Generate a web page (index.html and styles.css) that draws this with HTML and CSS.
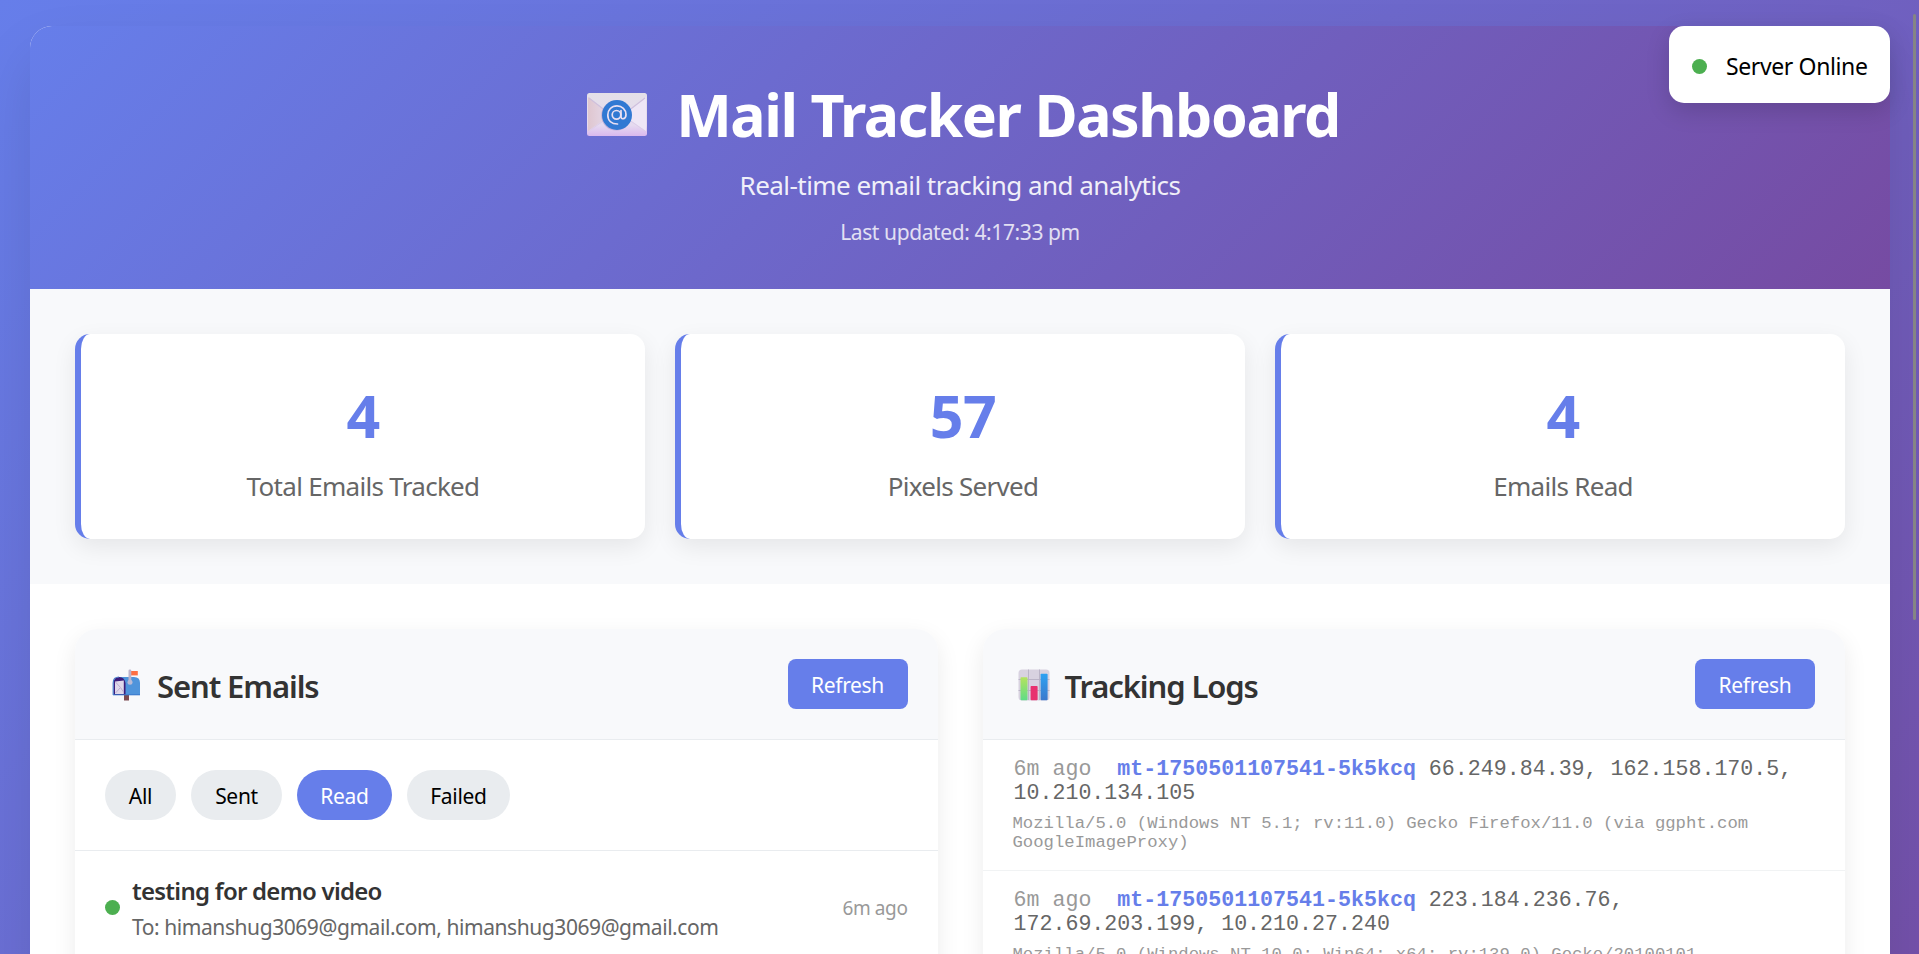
FILE: index.html
```html
<!DOCTYPE html>
<html lang="en">
<head>
<meta charset="utf-8">
<title>Mail Tracker Dashboard</title>
<link rel="stylesheet" href="styles.css">
</head>
<body>
<div class="status-badge"><span class="dot"></span><span class="status-text">Server Online</span></div>
<div class="container">
  <header class="header">
    <h1 class="title">
      <svg class="title-icon" viewBox="0 0 60 43">
        <defs>
          <linearGradient id="env" x1="0" y1="0" x2="0" y2="1"><stop offset="0" stop-color="#e4e0e8"/><stop offset=".75" stop-color="#e6daf0"/><stop offset="1" stop-color="#d9b8ee"/></linearGradient>
          <linearGradient id="envl" x1="0" y1="0" x2="1" y2="0"><stop offset="0" stop-color="#dfc6cf"/><stop offset="1" stop-color="#e6dcee"/></linearGradient>
        </defs>
        <rect width="60" height="43" rx="2.5" fill="url(#env)"/>
        <path d="M1 4 24 22 1 38Z" fill="url(#envl)"/>
        <path d="M59 4 36 22 59 38Z" fill="#eee6f6"/>
        <path d="M2 5 24 22M58 5 36 22" stroke="#cfc0dc" stroke-width="1.2" fill="none"/>
        <path d="M2 38 22 24M58 38 38 24" stroke="#dccde8" stroke-width="1" fill="none"/>
        <ellipse cx="29.2" cy="22.6" rx="15" ry="15" fill="#a48fc4" opacity=".5"/>
        <circle cx="30" cy="22" r="15" fill="#3179d3"/>
        <g fill="none" stroke="#e8dff2" stroke-width="1.7" stroke-linecap="round">
          <circle cx="29.5" cy="21.8" r="4.3"/>
          <path d="M34 17.5V23.5C34 27 39 26.5 39 21.5C39 16.500 35 12.800 30 12.800C24.500 12.800 20.800 17 20.800 22C20.800 27.500 24.500 31 30.500 31"/>
        </g>
      </svg>
      <span class="title-text">Mail Tracker Dashboard</span>
    </h1>
    <p class="subtitle"><span>Real-time email tracking and analytics</span></p>
    <p class="updated"><span>Last updated: 4:17:33 pm</span></p>
  </header>
  <section class="stats">
    <div class="stat"><div class="stat-number">4</div><div class="stat-label">Total Emails Tracked</div></div>
    <div class="stat"><div class="stat-number">57</div><div class="stat-label">Pixels Served</div></div>
    <div class="stat"><div class="stat-number">4</div><div class="stat-label">Emails Read</div></div>
  </section>
  <main class="content">
    <section class="panel">
      <div class="panel-header">
        <svg class="panel-icon" viewBox="0 0 32 32">
          <rect x="12" y="24" width="5" height="7.500" fill="#7d4a50"/>
          <path d="M6.500 8H22q6 0 6 6V26H8Z" fill="#4f94db"/>
          <path d="M1.500 26V14Q1.500 8 7 8T13.500 14V26Z" fill="#3d1d7c"/>
          <path d="M1 25.800H28" stroke="#3b78cc" stroke-width="1"/>
          <path d="M3 12.500 11.800 11.500V25H3Z" fill="#e0d8ea"/>
          <path d="M3.500 13 8.500 18.500 11.500 23M3.500 24 8 19" stroke="#b7a9cd" stroke-width=".9" fill="none"/>
          <path d="M1.200 26V14Q1.200 8 7 8" stroke="#4d80cc" stroke-width="1.200" fill="none"/>
          <rect x="19" y="2" width="6.800" height="4.400" fill="#ff7043"/>
          <rect x="16.500" y=".5" width="2.800" height="13" rx="1.200" fill="#bdb4cc"/>
          <circle cx="18" cy="13.300" r="2.500" fill="#b9bad6"/>
        </svg>
        <h2 class="panel-title">Sent Emails</h2>
        <button class="refresh">Refresh</button>
      </div>
      <div class="filters">
        <button class="pill pill-all">All</button>
        <button class="pill pill-sent">Sent</button>
        <button class="pill pill-read active">Read</button>
        <button class="pill pill-failed">Failed</button>
      </div>
      <div class="email">
        <span class="dot"></span>
        <div class="email-info">
          <div class="email-subject">testing for demo video</div>
          <div class="email-to">To: himanshug3069@gmail.com, himanshug3069@gmail.com</div>
        </div>
        <span class="email-time">6m ago</span>
      </div>
    </section>
    <section class="panel">
      <div class="panel-header logs-header">
        <svg class="panel-icon" viewBox="0 0 32 32">
          <defs>
            <linearGradient id="g" x1="0" y1="0" x2="0" y2="1"><stop offset="0" stop-color="#b4e35e"/><stop offset="1" stop-color="#5fdc86"/></linearGradient>
            <linearGradient id="b" x1="0" y1="0" x2="0" y2="1"><stop offset="0" stop-color="#2ea2f2"/><stop offset="1" stop-color="#3b78cc"/></linearGradient>
          </defs>
          <rect x=".5" y=".5" width="31" height="31" rx="3.500" fill="#d8d2e0"/>
          <path d="M10.500 .5V31M21.500 .5V31M.5 10.500H31.500M.5 21.500H31.500" stroke="#b8b0c4" stroke-width=".9"/>
          <rect x="2.500" y="8.300" width="7" height="22.900" rx=".8" fill="url(#g)"/>
          <rect x="12.600" y="17" width="7" height="14.200" rx=".8" fill="#e8316f"/>
          <rect x="22.600" y="4.800" width="7" height="26.400" rx=".8" fill="url(#b)"/>
        </svg>
        <h2 class="panel-title">Tracking Logs</h2>
        <button class="refresh">Refresh</button>
      </div>
      <div class="log">
        <div class="log-line"><span class="log-time">6m ago</span> <span class="log-id">mt-1750501107541-5k5kcq</span> <span class="log-ip">66.249.84.39, 162.158.170.5, 10.210.134.105</span></div>
        <div class="log-agent">Mozilla/5.0 (Windows NT 5.1; rv:11.0) Gecko Firefox/11.0 (via ggpht.com GoogleImageProxy)</div>
      </div>
      <div class="log">
        <div class="log-line"><span class="log-time">6m ago</span> <span class="log-id">mt-1750501107541-5k5kcq</span> <span class="log-ip">223.184.236.76, 172.69.203.199, 10.210.27.240</span></div>
        <div class="log-agent">Mozilla/5.0 (Windows NT 10.0; Win64; x64; rv:139.0) Gecko/20100101</div>
      </div>
    </section>
  </main>
</div>
<div class="scroll-thumb"></div>
</body>
</html>
```

FILE: styles.css
```css
* { box-sizing: border-box; margin: 0; padding: 0; }
html { height: 954px; overflow: hidden; }
body {
  height: 954px;
  overflow: hidden;
  padding: 26px 29px 0 30px;
  font-family: "Noto Sans", "Open Sans", sans-serif;
  background: linear-gradient(135deg, #667eea 0%, #764ba2 100%) 0 0 / 100% 1340px no-repeat;
}
.container {
  height: 1284px;
  background: #fff;
  border-radius: 22px;
  overflow: hidden;
  box-shadow: 0 30px 60px rgba(0, 0, 0, .1);
}
.header {
  height: 263px;
  padding-top: 45px;
  color: #fff;
  text-align: center;
  background: linear-gradient(135deg, #667eea 0%, #764ba2 100%);
}
.title {
  display: flex;
  align-items: center;
  justify-content: center;
  height: 86px;
  padding-left: 7px;
  font-size: 59px;
  line-height: 86px;
  font-weight: 700;
}
.title-icon { width: 60px; height: 43px; margin-right: 29px; }
.title-text { white-space: nowrap; letter-spacing: -1.45px; }
.subtitle { height: 48px; margin-top: 4px; line-height: 48px; font-size: 26px; letter-spacing: -.55px; opacity: .9; }
.updated { height: 42px; margin-top: 2px; line-height: 42px; font-size: 21px; letter-spacing: -.4px; opacity: .8; }

.stats {
  display: grid;
  grid-template-columns: repeat(3, 1fr);
  gap: 30px;
  height: 295px;
  padding: 45px;
  background: #f8f9fb;
}
.stat {
  padding-top: 38px;
  text-align: center;
  background: #fff;
  border-left: 6px solid #667eea;
  border-radius: 15px;
  box-shadow: 0 8px 23px rgba(0, 0, 0, .08);
}
.stat-number { height: 86px; line-height: 86px; font-size: 59px; font-weight: 700; letter-spacing: -.5px; color: #667eea; }
.stat-label { height: 50px; margin-top: 3px; line-height: 50px; font-size: 26px; letter-spacing: -.7px; color: #666; }

.content { display: grid; grid-template-columns: 1fr 1fr; gap: 45px; padding: 45px; }
.panel {
  height: 620px;
  background: #fff;
  border-radius: 22px;
  overflow: hidden;
  box-shadow: 0 8px 23px rgba(0, 0, 0, .08);
}
.panel-header {
  display: flex;
  align-items: center;
  height: 111px;
  padding: 0 30px 0 37px;
  background: #f8f9fb;
  border-bottom: 1px solid #e9ecef;
}
.logs-header { padding-left: 35px; }
.panel-icon { width: 32px; height: 32px; margin: 2px 13px 0 0; }
.logs-header .panel-icon { margin-right: 15px; }
.panel-title { flex: 1; padding-top: 4px; font-size: 31px; font-weight: 600; line-height: 44px; letter-spacing: -1.1px; color: #333; }
.refresh {
  width: 120px;
  height: 50px;
  border: 0;
  border-radius: 8px;
  background: #667eea;
  color: #fff;
  font-family: inherit;
  font-size: 21px;
  line-height: 50px;
  letter-spacing: -.35px;
  padding-top: 1px;
}
.filters { display: flex; gap: 15px; padding: 30px; border-bottom: 1px solid #e9ecef; }
.pill {
  height: 50px;
  border: 0;
  border-radius: 25px;
  background: #e9ecef;
  color: #000;
  font-family: inherit;
  font-size: 21px;
  line-height: 50px;
  letter-spacing: -.3px;
  padding-top: 1px;
}
.pill-all { width: 71px; }
.pill-sent { width: 91px; }
.pill-read { width: 95px; }
.pill-failed { width: 103px; }
.pill.active { background: #667eea; color: #fff; }

.dot { flex: none; width: 15px; height: 15px; border-radius: 50%; background: #4caf50; }
.email { display: flex; align-items: center; height: 113px; padding: 0 30px; }
.email-info { flex: 1; padding: 3px 0 0 12px; white-space: nowrap; }
.email-subject { height: 36px; line-height: 36px; font-size: 24px; font-weight: 600; letter-spacing: -.75px; color: #333; }
.email-to { height: 36px; line-height: 36px; font-size: 21px; letter-spacing: -.43px; color: #666; }
.email-time { font-size: 19px; letter-spacing: -.4px; color: #999; }

.log {
  height: 131px;
  padding: 17px 30px 0;
  border-bottom: 1px solid #f1f3f4;
  font-family: "Liberation Mono", monospace;
}
.log-line { padding-left: 1px; font-size: 21.6px; line-height: 24px; letter-spacing: .02px; }
.log-time { color: #999; margin-right: 13px; }
.log-id { color: #667eea; font-weight: 700; }
.log-ip { color: #666; }
.log-agent { margin-top: 9px; font-size: 17.28px; line-height: 19px; color: #999; }

.status-badge {
  position: absolute;
  top: 26px;
  right: 29px;
  display: flex;
  align-items: center;
  width: 221px;
  height: 77px;
  padding: 4px 0 0 23px;
  border-radius: 15px;
  background: #fff;
  color: #000;
  font-size: 23px;
  line-height: 34px;
  letter-spacing: -.38px;
  white-space: nowrap;
  box-shadow: 0 8px 23px rgba(0, 0, 0, .15);
}
.status-text { margin: -2px 0 0 19px; }
.scroll-thumb {
  position: absolute;
  top: 14px;
  right: 3px;
  width: 3px;
  height: 606px;
  border-radius: 2px;
  background: #858585;
}
```
